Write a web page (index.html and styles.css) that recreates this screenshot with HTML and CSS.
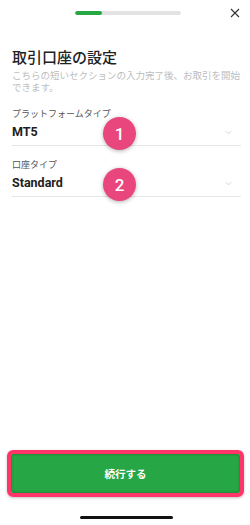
FILE: index.html
```html
<!DOCTYPE html>
<html lang="ja">
<head>
<meta charset="utf-8">
<link rel="stylesheet" href="styles.css">
</head>
<body>
<div class="screen">
  <header class="topbar">
    <span></span>
    <div class="progress"><div class="progress-fill" style="width:25%"></div></div>
    <svg class="close" viewBox="0 0 10 10" width="10" height="10"><path d="M1 1L9 9M9 1L1 9" stroke="#333" stroke-width="1.1" fill="none"/></svg>
  </header>
  <main class="content">
    <h1 class="title">取引口座の設定</h1>
    <p class="subtitle">こちらの短いセクションの入力完了後、お取引を開始できます。</p>
    <div class="field">
      <div class="label">プラットフォームタイプ</div>
      <div class="value"><span>MT5</span><svg class="chev" viewBox="0 0 8 5" width="7" height="5"><path d="M1 1L4 4L7 1" stroke="#c8c8c8" stroke-width="0.9" fill="none"/></svg></div>
      <span class="badge">1</span>
    </div>
    <div class="field">
      <div class="label">口座タイプ</div>
      <div class="value"><span>Standard</span><svg class="chev" viewBox="0 0 8 5" width="7" height="5"><path d="M1 1L4 4L7 1" stroke="#c8c8c8" stroke-width="0.9" fill="none"/></svg></div>
      <span class="badge">2</span>
    </div>
  </main>
  <footer class="footer">
    <div class="btn-outline"><button class="btn">続行する</button></div>
    <div class="home"></div>
  </footer>
</div>
</body>
</html>
```
FILE: styles.css
```css
* { box-sizing: border-box; }
html, body { margin: 0; padding: 0; background: #fff; }
body {
  font-family: Roboto, "Noto Sans CJK JP", sans-serif;
  color: #222;
}
.screen {
  width: 250px;
  height: 525px;
  display: flex;
  flex-direction: column;
}
.topbar {
  height: 26px;
  display: grid;
  grid-template-columns: 1fr 106px 1fr;
  align-items: center;
  padding: 0 10px 0 16px;
}
.progress {
  height: 4px;
  background: #e3e3e3;
  border-radius: 2px;
  overflow: hidden;
}
.progress-fill {
  height: 100%;
  background: #27a844;
  border-radius: 2px;
}
.close { justify-self: end; }
.content {
  flex: 1;
  padding: 0 9px 0 12px;
}
.title {
  margin: 22px 0 0;
  font-size: 15px;
  line-height: 20px;
  font-weight: 500;
  color: #222;
}
.subtitle {
  margin: 2px 0 0;
  font-size: 9.5px;
  line-height: 12px;
  color: #bdbdbd;
}
.field {
  position: relative;
  border-bottom: 1px solid #e6e6e6;
  margin-top: 13px;
}
.field:first-of-type { margin-top: 14px; }
.label {
  font-size: 9px;
  line-height: 12px;
  color: #555;
}
.value {
  display: flex;
  justify-content: space-between;
  align-items: center;
  font-size: 12.5px;
  font-weight: 700;
  line-height: 16px;
  padding: 4px 9px 5px 0;
  color: #1e1e1e;
}
.badge {
  position: absolute;
  left: 91px;
  top: 9px;
  width: 33px;
  height: 33px;
  border-radius: 50%;
  background: #e8467c;
  color: #fff;
  font-size: 17px;
  font-weight: 500;
  display: flex;
  align-items: center;
  justify-content: center;
  box-shadow: 0 1px 4px rgba(0,0,0,0.3);
}
.footer {
  display: flex;
  flex-direction: column;
  align-items: center;
}
.btn-outline {
  width: 237px;
  margin-left: 1px;
  border: 4px solid #ff356a;
  border-radius: 6px;
  box-shadow: 0 1px 3px rgba(0,0,0,0.25);
}
.btn {
  display: block;
  width: 100%;
  height: 39px;
  border: 0;
  border-radius: 2px;
  background: #26a645;
  color: #fff;
  font-family: Roboto, "Noto Sans CJK JP", sans-serif;
  font-size: 10.5px;
  font-weight: 700;
  box-shadow: inset 0 0 3px rgba(0,0,0,0.35);
}
.home {
  width: 93px;
  height: 3px;
  border-radius: 2px;
  background: #111;
  margin: 19px 0 6px 2px;
}
```
